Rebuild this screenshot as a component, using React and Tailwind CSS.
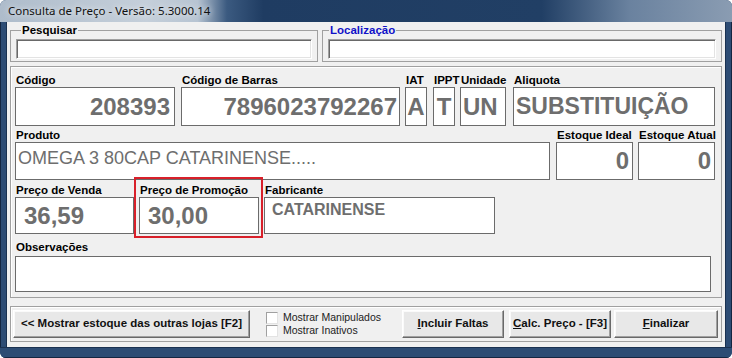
import React from "react";

const valueCls = "text-[24px] font-bold text-[#6e6e6e] leading-none whitespace-nowrap";

function Field({ label, className = "", boxClassName = "", children }) {
  return (
    <div className={`flex flex-col ${className}`}>
      <span className="h-[14px] pl-[1px] leading-[14px] text-[11.5px] font-bold text-black whitespace-nowrap">
        {label}
      </span>
      <div className={`flex bg-white border border-[#6b6b6b] ${boxClassName}`}>{children}</div>
    </div>
  );
}

function Button({ className = "", children }) {
  return (
    <button
      className={`h-[28px] bg-[#e8e8e8] border border-t-white border-l-white border-b-[#696969] border-r-[#696969] shadow-[inset_-1px_-1px_0_#a0a0a0,inset_1px_1px_0_#fafafa] text-[11.5px] font-bold text-[#111] ${className}`}
    >
      {children}
    </button>
  );
}

function Check({ label }) {
  return (
    <div className="flex items-center h-[12px]">
      <span className="w-[12px] h-[12px] bg-white border border-t-[#a0a0a0] border-l-[#a0a0a0] border-b-[#e3e3e3] border-r-[#e3e3e3]" />
      <span className="ml-[5px] text-[10.5px] text-[#222] leading-none whitespace-nowrap">{label}</span>
    </div>
  );
}

export default function App() {
  return (
    <div className="w-[732px] h-[358px] bg-white">
      <div className="w-[732px] h-[358px] flex flex-col rounded-[6px] overflow-hidden bg-[#2b4a71] font-['Liberation_Sans',Arial,sans-serif]">
        {/* Title bar */}
        <div className="h-[22px] shrink-0 flex items-center pl-[8px] bg-[linear-gradient(90deg,#aebccb_0%,#c5cfda_20%,#b7c4d2_27%,#3b5a80_31%,#1f3c62_36%,#213f65_74%,#6a829f_86%,#8a9cb2_100%)]">
          <span className="text-[11.5px] text-[#111] font-['Noto_Sans',sans-serif] [text-shadow:0_0_6px_#fff]">
            Consulta de Preço - Versão: 5.3000.14
          </span>
        </div>

        <div className="flex-1 flex min-h-0">
          <div className="w-[7px] bg-[#2d4c74] border-l border-l-[#142641] border-r border-r-[#1a3150]" />

          {/* Client area */}
          <div className="flex-1 bg-[#f0f0f0] px-[3px] pt-[1px] flex flex-col">
            {/* Search */}
            <div className="flex gap-[4px]">
              <fieldset className="w-[308px] border border-[#a0a0a0] px-[5px] pb-[2px]">
                <legend className="ml-[5px] px-[1px] h-[14px] leading-[14px] text-[11.5px] font-bold">Pesquisar</legend>
                <div className="mt-[2px] h-[20px] bg-white border border-t-[#a0a0a0] border-l-[#a0a0a0] border-b-white border-r-white shadow-[inset_1px_1px_0_#696969,inset_-1px_-1px_0_#e3e3e3]" />
              </fieldset>
              <fieldset className="w-[400px] border border-[#a0a0a0] px-[5px] pb-[2px]">
                <legend className="ml-[1px] px-[1px] h-[14px] leading-[14px] text-[11.5px] font-bold text-[#1010c8]">Localização</legend>
                <div className="mt-[2px] h-[20px] bg-white border border-t-[#a0a0a0] border-l-[#a0a0a0] border-b-white border-r-white shadow-[inset_1px_1px_0_#696969,inset_-1px_-1px_0_#e3e3e3]" />
              </fieldset>
            </div>

            {/* Product panel */}
            <div className="mt-[4px] border border-[#a0a0a0] shadow-[inset_1px_1px_0_#fff] pl-[4px] pt-[6px] pb-[5px]">
              <div className="flex">
                <Field label="Código" className="w-[160px]" boxClassName="h-[39px] items-center justify-end pr-[4px]">
                  <span className={valueCls}>208393</span>
                </Field>
                <Field label="Código de Barras" className="ml-[6px] w-[219px]" boxClassName="h-[39px] items-center justify-end pr-[2px]">
                  <span className={valueCls}>7896023792267</span>
                </Field>
                <Field label="IAT" className="ml-[5px] w-[22px]" boxClassName="h-[39px] items-center justify-center">
                  <span className={valueCls}>A</span>
                </Field>
                <Field label="IPPT" className="ml-[6px] w-[22px]" boxClassName="h-[39px] items-center justify-center">
                  <span className={valueCls}>T</span>
                </Field>
                <Field label="Unidade" className="ml-[5px] w-[46px]" boxClassName="h-[39px] items-center pl-[2px]">
                  <span className={valueCls}>UN</span>
                </Field>
                <Field label="Aliquota" className="ml-[7px] w-[202px]" boxClassName="h-[39px] items-center pl-[2px]">
                  <span className="text-[23px] font-bold text-[#6e6e6e] leading-none whitespace-nowrap">SUBSTITUIÇÃO</span>
                </Field>
              </div>

              <div className="flex mt-[2px]">
                <Field label="Produto" className="w-[535px]" boxClassName="h-[38px] items-start pl-[2px] pt-[6px]">
                  <span className="text-[18px] text-[#6e6e6e] leading-none whitespace-nowrap">OMEGA 3 80CAP CATARINENSE.....</span>
                </Field>
                <Field label="Estoque Ideal" className="ml-[6px] w-[77px]" boxClassName="h-[38px] items-center justify-end pr-[3px]">
                  <span className={valueCls}>0</span>
                </Field>
                <Field label="Estoque Atual" className="ml-[5px] w-[77px]" boxClassName="h-[38px] items-center justify-end pr-[3px]">
                  <span className={valueCls}>0</span>
                </Field>
              </div>

              <div className="flex items-start mt-[3px]">
                <Field label="Preço de Venda" className="w-[119px]" boxClassName="h-[37px] items-center pl-[8px]">
                  <span className={valueCls}>36,59</span>
                </Field>
                {/* highlighted promo price */}
                <div className="-mt-[6px] border-2 border-[#d8202a] pt-[4px] pl-[3px] pr-[2px] pb-[2px]">
                  <Field label="Preço de Promoção" className="w-[120px]" boxClassName="h-[37px] items-center pl-[8px]">
                    <span className={valueCls}>30,00</span>
                  </Field>
                </div>
                <Field label="Fabricante" className="ml-[1px] w-[231px]" boxClassName="h-[37px] items-start pl-[7px] pt-[4px]">
                  <span className="text-[16px] font-bold text-[#6e6e6e] leading-none">CATARINENSE</span>
                </Field>
              </div>

              <div className="mt-[2px] h-[14px] pl-[1px] leading-[14px] text-[11.5px] font-bold">Observações</div>
              <div className="mt-[2px] w-[696px] h-[36px] bg-white border border-[#6b6b6b]" />
            </div>

            {/* Bottom bar */}
            <div className="mt-[8px] border border-[#a0a0a0] shadow-[inset_1px_1px_0_#fff] flex items-center pl-[2px] pr-[3px] py-[3px]">
              <Button className="w-[237px]">&lt;&lt; Mostrar estoque das outras lojas [F2]</Button>
              <div className="ml-[16px] flex flex-col gap-[1px]">
                <Check label="Mostrar Manipulados" />
                <Check label="Mostrar Inativos" />
              </div>
              <Button className="ml-auto w-[102px]">
                <span className="underline">I</span>ncluir Faltas
              </Button>
              <Button className="ml-[5px] w-[102px]">
                <span className="underline">C</span>alc. Preço - [F3]
              </Button>
              <Button className="ml-[3px] w-[104px]">
                <span className="underline">F</span>inalizar
              </Button>
            </div>
          </div>

          <div className="w-[7px] bg-[#2d4c74] border-l border-l-[#1a3150] border-r border-r-[#142641]" />
        </div>

        <div className="h-[11px] shrink-0 bg-[#2d4c74] border-t border-t-[#1a3150] border-b border-b-[#142641]" />
      </div>
    </div>
  );
}
